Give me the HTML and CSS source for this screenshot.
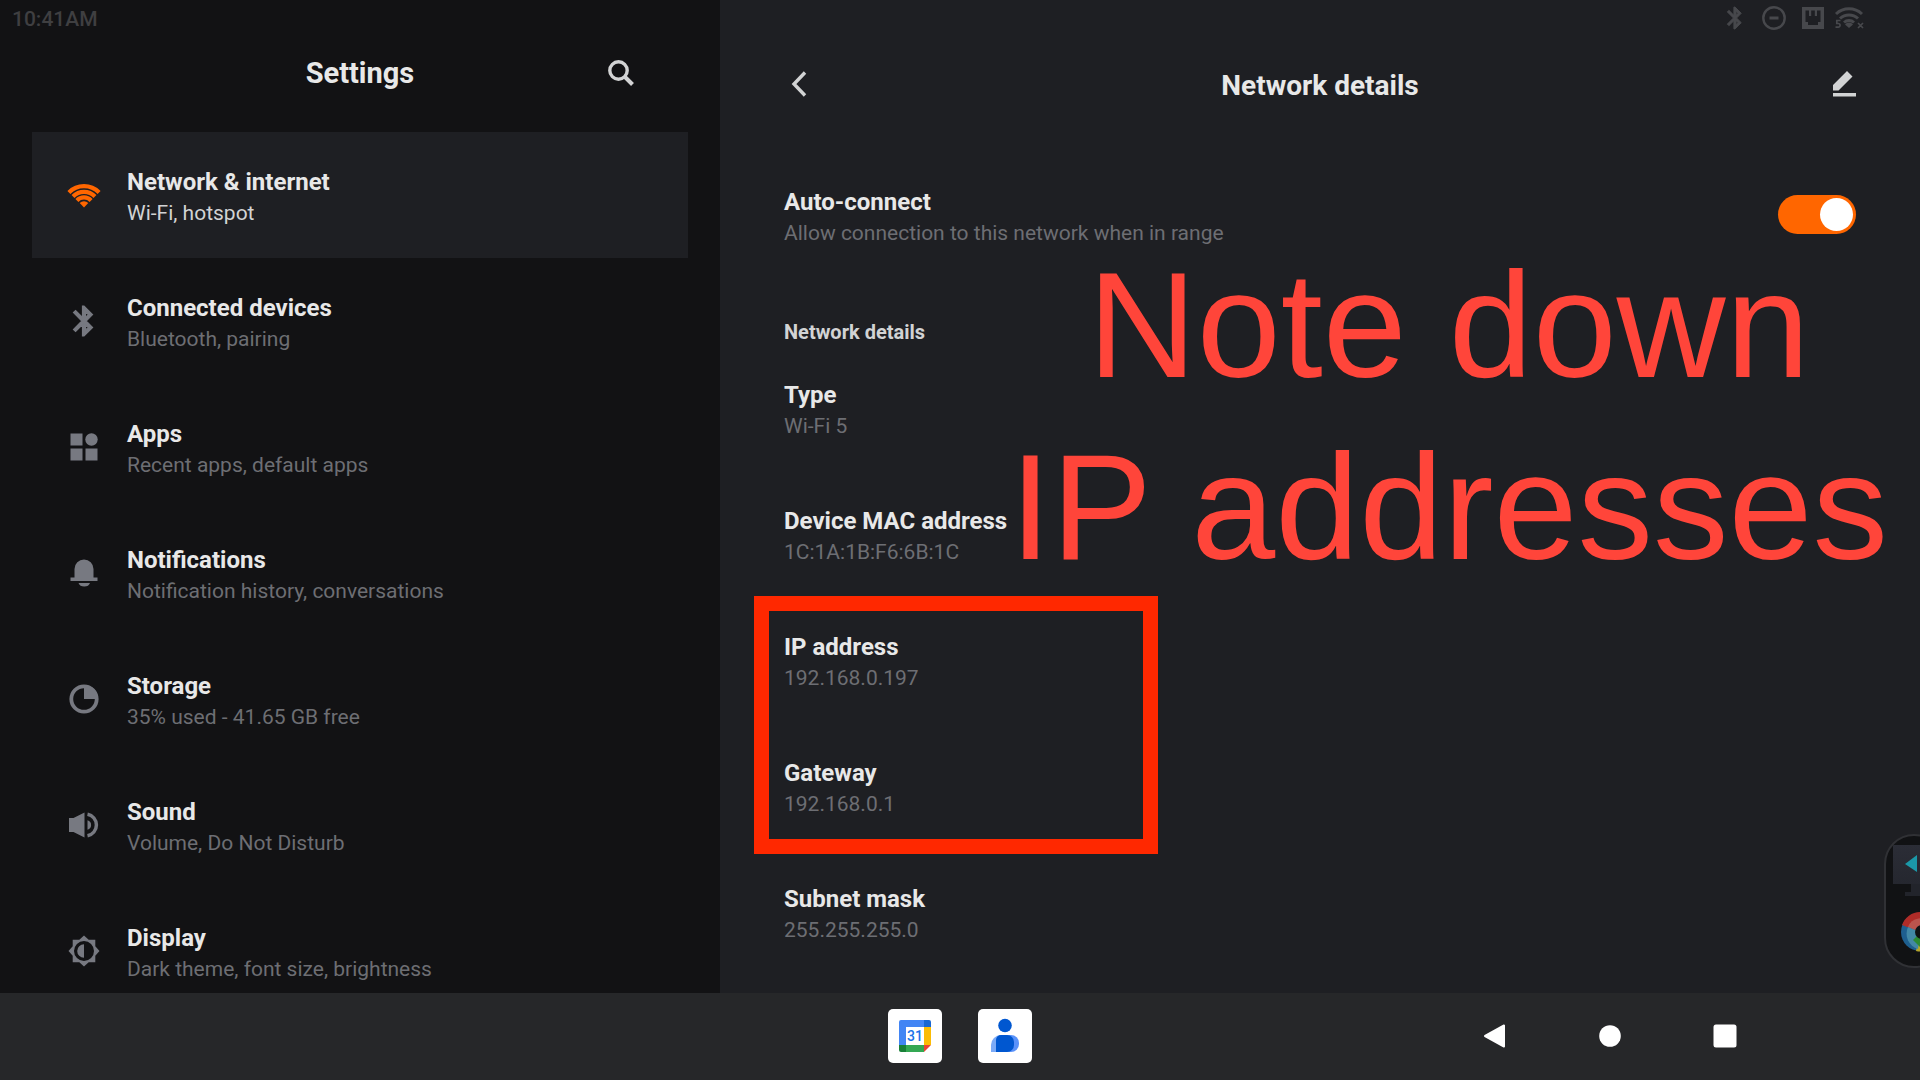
FILE: index.html
```
<!DOCTYPE html>
<html lang="en">
<head>
    <meta charset="UTF-8">
    <meta name="viewport" content="width=device-width, initial-scale=1">
    <title>Settings</title>
    <link rel="stylesheet" href="styles.css">
</head>
<body>
    <main class="screen">
        <aside class="sidebar">
            <div class="status">
                <time>10:41AM</time>
            </div>
            <header class="sidebar-header">
                <h1>Settings</h1>
                <button class="icon-button" aria-label="Search">
                    <svg class="icon-search" viewBox="0 0 26 26"><circle cx="10.5" cy="10.5" r="8.7" fill="none" stroke="currentColor" stroke-width="3.4"/><path d="M17 17l7.5 7.5" stroke="currentColor" stroke-width="4"/></svg>
                </button>
            </header>
            <nav class="menu">
                <a class="menu-item active" href="#network">
                    <svg class="menu-icon" viewBox="0 0 36 36" fill="none" stroke="currentColor"><path d="M2.9 15.4a21.4 21.4 0 0 1 30.2 0M7 19.5a15.6 15.6 0 0 1 22 0M10.9 23.4a10 10 0 0 1 14.2 0" stroke-width="4.2"/><path d="M18 30.5l-4.3-4.4a6.2 6.2 0 0 1 8.6 0z" fill="currentColor" stroke="none"/></svg>
                    <span class="text"><span class="title">Network &amp; internet</span><span class="sub">Wi-Fi, hotspot</span></span>
                </a>
                <a class="menu-item" href="#devices">
                    <svg class="menu-icon" viewBox="0 0 24 24" fill="currentColor"><path d="M17.71 7.71L12 2h-1v7.59L6.41 5 5 6.41 10.59 12 5 17.59 6.41 19 11 14.41V22h1l5.71-5.71-4.3-4.29 4.3-4.29zM13 5.83l1.88 1.88L13 9.59V5.83zm1.88 10.46L13 18.17v-3.76l1.88 1.88z" stroke="currentColor" stroke-width=".8"/></svg>
                    <span class="text"><span class="title">Connected devices</span><span class="sub">Bluetooth, pairing</span></span>
                </a>
                <a class="menu-item" href="#apps">
                    <svg class="menu-icon" viewBox="0 0 36 36" fill="currentColor"><path d="M4.5 4.5h12v12h-12zM4.5 19.5h12v12h-12zM19.5 19.5h12v12h-12z"/><circle cx="25.5" cy="10.5" r="6.2"/></svg>
                    <span class="text"><span class="title">Apps</span><span class="sub">Recent apps, default apps</span></span>
                </a>
                <a class="menu-item" href="#notifications">
                    <svg class="menu-icon" viewBox="0 0 36 36" fill="currentColor"><path d="M8.5 22.5V14a9.5 9.5 0 0 1 19 0v8.5h4V26h-27v-3.500zM12.500 28h11.500a6 5 0 0 1-11.500 0z"/></svg>
                    <span class="text"><span class="title">Notifications</span><span class="sub">Notification history, conversations</span></span>
                </a>
                <a class="menu-item" href="#storage">
                    <svg class="menu-icon" viewBox="0 0 36 36"><circle cx="18" cy="18" r="12.7" fill="none" stroke="currentColor" stroke-width="3.8"/><path d="M18 4v14h14A14 14 0 0 0 18 4z" fill="currentColor"/></svg>
                    <span class="text"><span class="title">Storage</span><span class="sub">35% used - 41.65 GB free</span></span>
                </a>
                <a class="menu-item" href="#sound">
                    <svg class="menu-icon" viewBox="0 0 36 36" fill="currentColor"><path d="M3 11h4.5l11-5.500v25L7.500 25H3z"/><path d="M21.5 13.2a5 5 0 0 1 0 9.6z"/><path d="M21.5 7.2a11 11 0 0 1 0 21.6" fill="none" stroke="currentColor" stroke-width="3.5"/></svg>
                    <span class="text"><span class="title">Sound</span><span class="sub">Volume, Do Not Disturb</span></span>
                </a>
                <a class="menu-item" href="#display">
                    <svg class="menu-icon" viewBox="0 0 36 36"><path fill="currentColor" fill-rule="evenodd" d="M18 2.5l4.7 4.2h6.6v6.6l4.2 4.700-4.200 4.700v6.600h-6.600L18 33.500l-4.700-4.200H6.700v-6.600L2.500 18l4.200-4.700V6.700h6.600zM18 8a10 10 0 1 0 0 20 10 10 0 0 0 0-20zM18 11.200v13.600a6.800 6.800 0 0 1 0-13.600z"/></svg>
                    <span class="text"><span class="title">Display</span><span class="sub">Dark theme, font size, brightness</span></span>
                </a>
            </nav>
        </aside>

        <section class="details">
            <div class="status status-right">
                <svg class="status-icon" viewBox="1 1 22 22" fill="currentColor"><path d="M17.71 7.71L12 2h-1v7.59L6.41 5 5 6.41 10.59 12 5 17.59 6.41 19 11 14.41V22h1l5.71-5.71-4.3-4.29 4.3-4.29zM13 5.83l1.88 1.88L13 9.59V5.83zm1.88 10.46L13 18.17v-3.76l1.88 1.88z" stroke="currentColor" stroke-width=".9"/></svg>
                <svg class="status-icon" viewBox="0 0 24 24" fill="none" stroke="currentColor"><circle cx="12" cy="12" r="10.7" stroke-width="2.4"/><path d="M7.5 12h9" stroke-width="3"/></svg>
                <svg class="status-icon" viewBox="0 0 24 24" fill="currentColor" fill-rule="evenodd"><path d="M1 1h22v22H1zM4.5 4.5V16H7v3h10v-3h2.500V4.500H16V10h-2.200V4.500h-3.600V10H8V4.500z"/></svg>
                <svg class="status-icon wide" viewBox="0 0 30 24" fill="none" stroke="currentColor"><path d="M2 8a19 19 0 0 1 26 0M6 12.5a13 13 0 0 1 18 0M10 16.5a7.5 7.5 0 0 1 10 0" stroke-width="3"/><path d="M15 22l-4-3.5a5 5 0 0 1 8 0z" fill="currentColor" stroke="none"/><path d="M6.5 14.5H2.8v3h1.4a1.8 1.8 0 0 1 0 3.7H1.5M24 17l5 5M29 17l-5 5" stroke-width="1.7"/></svg>
            </div>
            <header class="details-header">
                <button class="icon-button" aria-label="Back">
                    <svg class="icon-back" viewBox="0 0 18 26"><path d="M15 1.5L4 13l11 11.5" fill="none" stroke="currentColor" stroke-width="3.4"/></svg>
                </button>
                <h2>Network details</h2>
                <button class="icon-button" aria-label="Edit">
                    <svg class="icon-edit" viewBox="0 0 24 26" fill="currentColor"><path d="M1 19.5V14L15 0l5.5 5.5-14 14zM1 22h23v3.500H1z"/></svg>
                </button>
            </header>

            <div class="row auto-connect">
                <label class="text" for="auto"><span class="title">Auto-connect</span><span class="sub">Allow connection to this network when in range</span></label>
                <input class="toggle" type="checkbox" id="auto" checked>
            </div>

            <h3>Network details</h3>
            <div class="row"><div class="text"><span class="title">Type</span><span class="sub">Wi-Fi 5</span></div></div>
            <div class="row"><div class="text"><span class="title">Device MAC address</span><span class="sub">1C:1A:1B:F6:6B:1C</span></div></div>
            <div class="highlight">
                <div class="row"><div class="text"><span class="title">IP address</span><span class="sub">192.168.0.197</span></div></div>
                <div class="row"><div class="text"><span class="title">Gateway</span><span class="sub">192.168.0.1</span></div></div>
            </div>
            <div class="row"><div class="text"><span class="title">Subnet mask</span><span class="sub">255.255.255.0</span></div></div>

            <p class="note">Note down<br>IP addresses</p>

            <!-- floating dock, half off the right edge -->
            <div class="dock">
                <svg viewBox="0 0 60 130">
                    <defs>
                        <linearGradient id="screenFill" x1="0" y1="0" x2="0" y2="1"><stop offset="0" stop-color="#2b2d36"/><stop offset="1" stop-color="#25272f"/></linearGradient>
                    </defs>
                    <path d="M7 9h53v39H7z" fill="url(#screenFill)"/>
                    <path d="M25 48h30v7h5v5H19v-4h6z" fill="#22242b"/>
                    <path d="M19 28l12-9v17z" fill="#1b98a8"/>
                    <circle cx="34" cy="96" r="19" fill="#1e5f8f"/>
                    <path d="M16 89a19 19 0 0 1 36 0L34 96z" fill="#b02c28"/>
                    <path d="M34 96l18-7a19 19 0 0 1-22 26z" fill="#b6a52a"/>
                    <path d="M22 91a13 13 0 0 1 23-3l-11 8z" fill="#bb544d"/>
                    <path d="M22 91l12 5-2 17a16 16 0 0 1-10-22z" fill="#4288a6"/>
                    <path d="M27 104l7-7v14z" fill="#2c8a35"/>
                    <circle cx="36" cy="96" r="7" fill="#111214"/>
                </svg>
            </div>
        </section>
    </main>

    <footer class="taskbar">
        <div class="apps">
            <button class="app" aria-label="Calendar">
                <svg viewBox="0 0 54 54">
                    <path d="M13 11h23v7H18v18h-7V13a2 2 0 0 1 2-2z" fill="#4285f4"/>
                    <path d="M36 11h5a2 2 0 0 1 2 2v5h-7z" fill="#1967d2"/>
                    <path d="M36 18h7v18h-7z" fill="#fbbc04"/>
                    <path d="M18 36h18v7H18z" fill="#34a853"/>
                    <path d="M11 36h7v7h-5a2 2 0 0 1-2-2z" fill="#188038"/>
                    <path d="M36 36h7l-7 7z" fill="#ea4335"/>
                    <text class="day" x="27" y="32" text-anchor="middle">31</text>
                </svg>
            </button>
            <button class="app" aria-label="Contacts">
                <svg viewBox="0 0 54 54">
                    <path d="M13 43v-7a10 10 0 0 1 10-10h6v17z" fill="#7baaf7"/>
                    <path d="M28 26h5a8 8 0 0 1 8 8v1a8 8 0 0 1-8 8h-5z" fill="#5a92fa"/>
                    <path d="M18 43V31a5 5 0 0 1 5-5h6a7 7 0 0 1 7 7v3a7 7 0 0 1-7 7z" fill="#0057d0"/>
                    <circle cx="27" cy="16.5" r="6.8" fill="#0057d0"/>
                </svg>
            </button>
        </div>
        <div class="nav-buttons">
            <button aria-label="Back"><svg viewBox="0 0 24 24"><path d="M2 12L21 1.5v21z" stroke="currentColor" stroke-width="2" stroke-linejoin="round"/></svg></button>
            <button aria-label="Home"><svg viewBox="0 0 24 24"><circle cx="12" cy="12" r="10.8"/></svg></button>
            <button aria-label="Recent apps"><svg viewBox="0 0 24 24"><rect x=".5" y=".5" width="23" height="23" rx="2.5"/></svg></button>
        </div>
    </footer>
</body>
</html>
```
FILE: styles.css
```
*, *::before, *::after{
    box-sizing: border-box;
}
body{
    margin: 0;
    height: 100vh;
    display: flex;
    flex-direction: column;
    background: #121214;
    color: #e8e8e8;
    font-family: Roboto, sans-serif;
    overflow: hidden;
}
h1, h2, h3, p{
    margin: 0;
}
button{
    padding: 0;
    border: 0;
    background: none;
    color: inherit;
    cursor: pointer;
}
svg{
    display: block;
}
.screen{
    flex: 1;
    min-height: 0;
    display: grid;
    grid-template-columns: 3fr 5fr;
}

/* status bar */
.status{
    display: flex;
    align-items: center;
    height: 38px;
    padding: 0 12px;
    color: #3f3f41;
    font-size: 21px;
    font-weight: 500;
}
.status-right{
    justify-content: flex-end;
    gap: 15px;
    height: 36px;
    padding: 0 56px;
    color: #47484c;
}
.status-icon{
    width: 24px;
    height: 24px;
}
.status-icon.wide{
    width: 30px;
    margin-left: -6px;
}

/* left side */
.sidebar{
    overflow: hidden;
    padding: 0 32px;
}
.sidebar .status{
    margin: 0 -32px;
}
.sidebar-header{
    display: grid;
    grid-template-columns: 1fr auto 1fr;
    align-items: center;
    height: 70px;
    margin-bottom: 24px;
    padding: 0 54px;
}
.sidebar-header h1{
    grid-column: 2;
}
h1{
    font-size: 29px;
    line-height: 36px;
}
h2{
    padding-top: 4px;
    font-size: 28px;
    line-height: 36px;
}
.icon-button{
    justify-self: end;
    color: #d2d3d4;
}
.icon-search{
    width: 26px;
    height: 26px;
}
.menu-item{
    display: flex;
    align-items: center;
    gap: 25px;
    height: 126px;
    padding: 0 34px;
    color: inherit;
    text-decoration: none;
}
.menu-item .text{
    padding-top: 4px;
}
.menu-item.active{
    background: #1e1f23;
}
.menu-icon{
    flex: none;
    width: 36px;
    height: 36px;
    margin-bottom: 1px;
    color: #777981;
}
.active .menu-icon{
    color: #ff6600;
}
.text{
    display: flex;
    flex-direction: column;
}
.title{
    font-size: 24px;
    font-weight: bold;
    line-height: 32px;
}
.sub{
    color: #6d6e73;
    font-size: 21px;
    line-height: 30px;
}
.active .sub{
    color: #d2d3d4;
}

/* right side */
.details{
    position: relative;
    overflow: hidden;
    padding: 0 64px;
    background: #1e1f23;
}
.details .status{
    margin: 0 -64px;
}
.details-header{
    display: grid;
    grid-template-columns: 1fr auto 1fr;
    align-items: center;
    height: 96px;
    margin-bottom: 22px;
}
.details-header .icon-button:first-child{
    justify-self: start;
    padding-left: 6px;
}
.icon-back{
    width: 18px;
    height: 26px;
}
.icon-edit{
    width: 24px;
    height: 26px;
}
.row{
    display: flex;
    align-items: center;
    justify-content: space-between;
    height: 126px;
}
h3{
    height: 67px;
    padding-top: 36px;
    color: #d2d3d4;
    font-size: 20px;
    line-height: 32px;
}
.toggle{
    appearance: none;
    display: flex;
    justify-content: flex-end;
    width: 78px;
    height: 39px;
    margin: 0 0 6px;
    padding: 3px;
    border-radius: 20px;
    background: #ff6600;
}
.toggle::before{
    content: "";
    width: 33px;
    height: 33px;
    border-radius: 50%;
    background: white;
}
.toggle:not(:checked){
    justify-content: flex-start;
    background: #777981;
}

/* red marks on top of the settings */
.highlight{
    position: relative;
}
.highlight::after{
    content: "";
    position: absolute;
    top: -3px;
    bottom: -3px;
    left: -30px;
    width: 404px;
    border: 15px solid #ff2800;
}
.note{
    position: absolute;
    top: 234px;
    right: 32px;
    color: #ff453a;
    font-family: "Liberation Sans", sans-serif;
    font-size: 151px;
    line-height: 182px;
    text-align: center;
    white-space: nowrap;
}
.dock{
    position: absolute;
    top: 834px;
    right: -24px;
    width: 60px;
    height: 134px;
    border: 2px solid #303135;
    border-radius: 32px;
    background: #111214;
    overflow: hidden;
}
.dock svg{
    width: 60px;
    height: 130px;
}

/* bottom bar */
.taskbar{
    flex: none;
    display: grid;
    grid-template-columns: 1fr auto 1fr;
    align-items: center;
    height: 87px;
    padding-bottom: 2px;
    background: #262729;
}
.apps{
    grid-column: 2;
    display: flex;
    gap: 36px;
}
.app{
    width: 54px;
    height: 54px;
    border-radius: 5px;
    background: white;
}
.day{
    fill: #1a73e8;
    font-family: Roboto, sans-serif;
    font-size: 14px;
    font-weight: 500;
}
.nav-buttons{
    display: flex;
    justify-content: flex-end;
    padding-right: 138px;
    color: white;
}
.nav-buttons button{
    width: 115px;
}
.nav-buttons svg{
    width: 24px;
    height: 24px;
    margin: 0 auto;
    fill: currentColor;
}
```
